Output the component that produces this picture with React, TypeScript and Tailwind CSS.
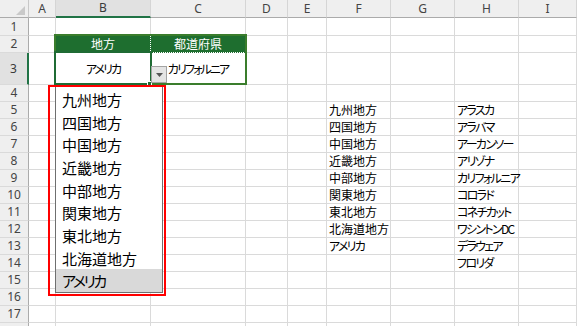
import React from "react";

const COLS = ["A", "B", "C", "D", "E", "F", "G", "H", "I"];
const ROWS = Array.from({ length: 18 }, (_, i) => i + 1);

const F: Record<number, string> = {
  5: "九州地方",
  6: "四国地方",
  7: "中国地方",
  8: "近畿地方",
  9: "中部地方",
  10: "関東地方",
  11: "東北地方",
  12: "北海道地方",
  13: "アメリカ",
};
const H: Record<number, string> = {
  5: "アラスカ",
  6: "アラバマ",
  7: "アーカンソー",
  8: "アリゾナ",
  9: "カリフォルニア",
  10: "コロラド",
  11: "コネチカット",
  12: "ワシントンDC",
  13: "デラウェア",
  14: "フロリダ",
};

const LIST = [
  "九州地方",
  "四国地方",
  "中国地方",
  "近畿地方",
  "中部地方",
  "関東地方",
  "東北地方",
  "北海道地方",
  "アメリカ",
];

const jp = "[font-family:'Noto_Sans_CJK_JP',sans-serif] [font-feature-settings:'palt']";
const ui = "[font-family:'Noto_Sans',sans-serif]";

const isKana = (s: string) => /^[\u30A0-\u30FFA-Z]+$/.test(s);
const kanaCls = (s: string) => (isKana(s) ? "tracking-[-0.14em]" : "");

function DataCell({ r, c }: { r: number; c: string }) {
  const base =
    "border-r border-b border-[#dadada] flex items-center whitespace-nowrap overflow-visible text-[12px] leading-none text-black " +
    jp;
  if (r === 2 && c === "B") {
    return (
      <div className={`${jp} flex items-center justify-center bg-[#1e6e2f] text-white text-[12px] leading-none border-r border-b border-dotted border-r-white border-b-[#1e6e2f]`}>
        地方
      </div>
    );
  }
  if (r === 2 && c === "C") {
    return (
      <div className={`${jp} flex items-center justify-center bg-[#1e6e2f] text-white text-[12px] leading-none border-r border-b border-dotted border-b-white border-r-[#1e6e2f]`}>
        都道府県
      </div>
    );
  }
  if (r === 3 && c === "B") {
    return <div className={`${base} justify-center tracking-[-0.16em]`}>アメリカ</div>;
  }
  if (r === 3 && c === "C") {
    return <div className={`${base} justify-center tracking-[-0.16em]`}>カリフォルニア</div>;
  }
  if (c === "F" && F[r]) {
    return <div className={`${base} pl-[2px] ${kanaCls(F[r])}`}>{F[r]}</div>;
  }
  if (c === "H" && H[r]) {
    return <div className={`${base} pl-[2px] ${kanaCls(H[r])}`}>{H[r]}</div>;
  }
  return <div className={base} />;
}

export default function App() {
  return (
    <div className="relative w-[577px] h-[326px] overflow-hidden bg-white">
      <div className="grid grid-cols-[29px_27px_95px_95px_42px_39px_64px_64px_64px_1fr] grid-rows-[18px_18px_17px_32px_repeat(15,17px)]">
        {/* corner */}
        <div className="bg-[#efefef] border-r border-b border-r-[#c8c8c8] border-b-[#ababab] flex items-end justify-end pr-[3px] pb-[2px]">
          <svg width="9" height="9" viewBox="0 0 9 9">
            <polygon points="9,0 9,9 0,9" fill="#c9c9c9" />
          </svg>
        </div>
        {COLS.map((c) =>
          c === "B" ? (
            <div
              key={c}
              className={`${ui} bg-[#e1e1e1] border-r border-b-2 border-r-[#d5d5d5] border-b-[#217346] flex items-center justify-center text-[12px] leading-none text-[#3a3a3a]`}
            >
              {c}
            </div>
          ) : (
            <div
              key={c}
              className={`${ui} bg-[#efefef] border-r border-b border-r-[#d5d5d5] border-b-[#ababab] flex items-center justify-center text-[12px] leading-none text-[#444]`}
            >
              {c}
            </div>
          )
        )}
        {ROWS.map((r) => (
          <React.Fragment key={r}>
            {r === 3 ? (
              <div className={`${ui} bg-[#e1e1e1] border-r-2 border-b border-r-[#217346] border-b-[#dadada] flex items-center justify-center text-[12px] leading-none text-[#3a3a3a]`}>
                {r}
              </div>
            ) : (
              <div className={`${ui} bg-[#efefef] border-r border-b border-r-[#ababab] border-b-[#dadada] flex items-center justify-center text-[12px] leading-none text-[#444]`}>
                {r < 18 ? r : ""}
              </div>
            )}
            {COLS.map((c) => (
              <DataCell key={c} r={r} c={c} />
            ))}
          </React.Fragment>
        ))}
      </div>

      {/* table outline */}
      <div className="absolute left-[54px] top-[34px] w-[193px] h-[51px] border-2 border-[#3a7d2c] pointer-events-none" />
      {/* active cell */}
      <div className="absolute left-[54px] top-[51px] w-[98px] h-[34px] border-2 border-[#1f6b34] pointer-events-none" />
      <div className="absolute left-[147px] top-[81px] w-[5px] h-[5px] bg-[#1f6b34] border border-white" />

      {/* dropdown button */}
      <div className="absolute left-[151px] top-[66px] w-[16px] h-[17px] bg-[#e4e4e4] border border-[#a3a3a3] flex items-center justify-center">
        <svg width="7" height="4" viewBox="0 0 7 4">
          <polygon points="0,0 7,0 3.5,4" fill="#555" />
        </svg>
      </div>

      {/* dropdown list */}
      <div className={`${jp} absolute left-[55px] top-[85px] w-[108px] h-[208px] bg-white border-l border-r border-b border-[#6f6f6f] pt-[3px] flex flex-col`}>
        {LIST.map((t, i) => (
          <div
            key={t}
            className={`h-[22.7px] flex items-center pl-[6px] text-[15px] leading-none text-black whitespace-nowrap ${
              isKana(t) ? "tracking-[-0.16em]" : ""
            } ${i === LIST.length - 1 ? "bg-[#d9d9d9]" : ""}`}
          >
            {t}
          </div>
        ))}
      </div>

      {/* red highlight rectangle */}
      <div className="absolute left-[48px] top-[85px] w-[118px] h-[211px] border-2 border-[#ff0000] pointer-events-none" />
    </div>
  );
}
